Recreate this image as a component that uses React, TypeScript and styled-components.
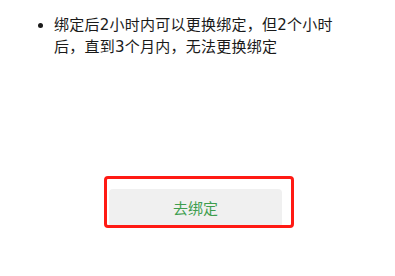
import React from "react";
import styled, { createGlobalStyle } from "styled-components";

const GlobalStyle = createGlobalStyle`
  html, body {
    margin: 0;
    padding: 0;
    background: #ffffff;
  }
  body {
    font-family: "DejaVu Sans", "Noto Sans CJK SC", sans-serif;
    color: #1a1a1a;
  }
`;

const Page = styled.div`
  width: 395px;
  height: 276px;
  display: flex;
  flex-direction: column;
`;

const NoteList = styled.ul`
  margin: 14px 0 0 0;
  padding: 0 0 0 54px;
  width: 286px;
  list-style: none;
`;

const NoteItem = styled.li`
  position: relative;
  font-size: 15px;
  line-height: 22px;
  letter-spacing: 0.25px;
  color: #1a1a1a;

  &::before {
    content: "";
    position: absolute;
    left: -16px;
    top: 9px;
    width: 5px;
    height: 5px;
    border-radius: 50%;
    background: #1a1a1a;
  }
`;

const ActionArea = styled.div`
  position: relative;
  margin: 131px 0 0 109px;
  width: 173px;
`;

const UnbindButton = styled.button`
  display: flex;
  align-items: center;
  justify-content: center;
  width: 173px;
  height: 38px;
  padding: 0 0 2px 0;
  border: none;
  border-radius: 4px;
  background: #f0f0f0;
  color: #3e9e4f;
  font-family: "Noto Sans CJK SC", sans-serif;
  font-size: 15px;
  line-height: 1;
  cursor: pointer;
`;

const Highlight = styled.div`
  position: absolute;
  left: -5px;
  top: -13px;
  width: 190px;
  height: 52px;
  box-sizing: border-box;
  border: 3px solid #ff1a14;
  border-radius: 4px;
  pointer-events: none;
`;

export default function App() {
  return (
    <>
      <GlobalStyle />
      <Page>
        <NoteList>
          <NoteItem>绑定后2小时内可以更换绑定，但2个小时后，直到3个月内，无法更换绑定</NoteItem>
        </NoteList>
        <ActionArea>
          <UnbindButton>去绑定</UnbindButton>
          <Highlight />
        </ActionArea>
      </Page>
    </>
  );
}
